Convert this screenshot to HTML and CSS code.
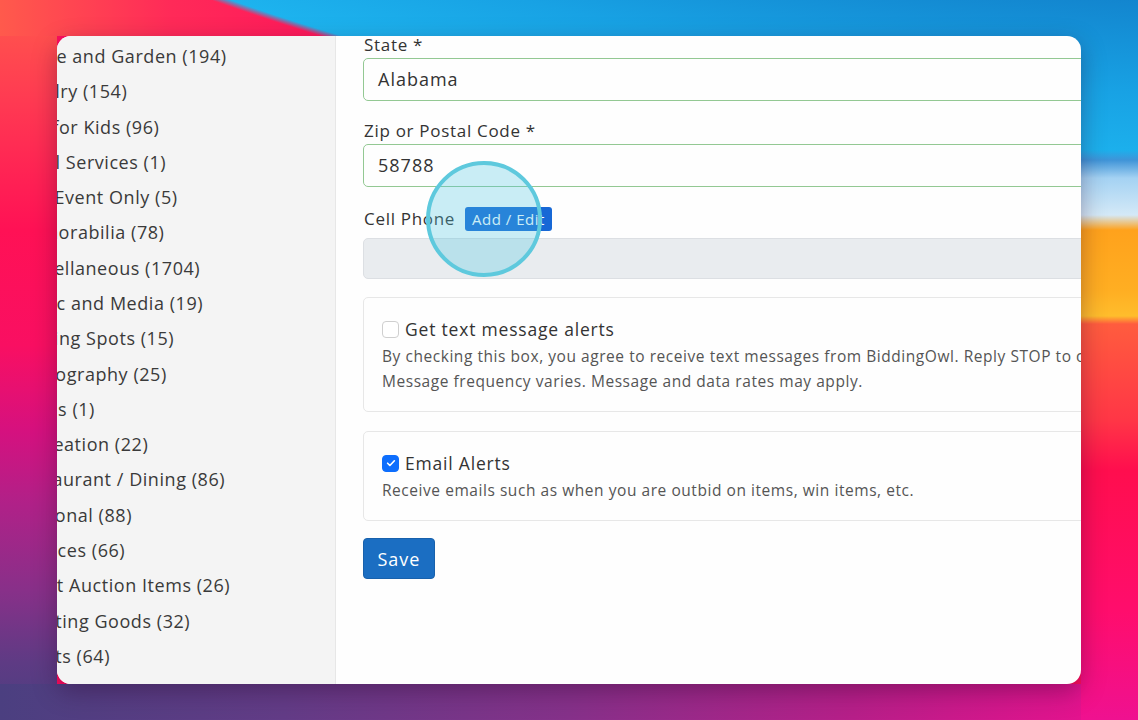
FILE: index.html
```html
<!DOCTYPE html>
<html lang="en">
<head>
<meta charset="utf-8">
<title>Profile</title>
<link rel="stylesheet" href="styles.css">
</head>
<body>
<div class="window">
  <aside class="sidebar">
    <ul class="cats">
      <li>Home and Garden (194)</li>
      <li>Jewelry (154)</li>
      <li>Just for Kids (96)</li>
      <li>Legal Services (1)</li>
      <li>Live Event Only (5)</li>
      <li>Memorabilia (78)</li>
      <li>Miscellaneous (1704)</li>
      <li>Music and Media (19)</li>
      <li>Parking Spots (15)</li>
      <li>Photography (25)</li>
      <li>Prizes (1)</li>
      <li>Recreation (22)</li>
      <li>Restaurant / Dining (86)</li>
      <li>Seasonal (88)</li>
      <li>Services (66)</li>
      <li>Silent Auction Items (26)</li>
      <li>Sporting Goods (32)</li>
      <li>Sports (64)</li>
      <li>Travel and Getaways (37)</li>
    </ul>
  </aside>
  <main class="main">
    <form class="form">
      <div class="group">
        <label class="label">State *</label>
        <div class="input valid">Alabama</div>
      </div>
      <div class="group">
        <label class="label">Zip or Postal Code *</label>
        <div class="input valid">58788</div>
      </div>
      <div class="group">
        <div class="label label-row">Cell Phone <span class="badge">Add / Edit</span></div>
        <div class="input disabled"></div>
      </div>
      <div class="card">
        <div class="check-row"><span class="checkbox"></span><span class="check-title">Get text message alerts</span></div>
        <p class="desc">By checking this box, you agree to receive text messages from BiddingOwl. Reply STOP to opt out.<br>Message frequency varies. Message and data rates may apply.</p>
      </div>
      <div class="card">
        <div class="check-row"><span class="checkbox checked"><svg viewBox="0 0 16 16" width="12" height="12"><path d="M3.5 8.3l3 3 6-6.3" fill="none" stroke="#fff" stroke-width="2.2" stroke-linecap="round" stroke-linejoin="round"/></svg></span><span class="check-title">Email Alerts</span></div>
        <p class="desc">Receive emails such as when you are outbid on items, win items, etc.</p>
      </div>
      <button type="button" class="btn-save">Save</button>
    </form>
  </main>
  <div class="cursor-ring"></div>
</div>
</body>
</html>
```

FILE: styles.css
```css
* { box-sizing: border-box; }
html, body { margin: 0; height: 720px; overflow: hidden; }
body {
  padding: 36px 57px;
  font-family: "Open Sans", "Liberation Sans", sans-serif;
  color: #333;
  background:
    linear-gradient(to bottom, rgba(0,0,0,0) 0, rgba(0,0,0,0) 150px, #3f94d8 160px, #a4d2f3 178px, #d4e9f7 215px, #ffa21c 230px, #ffae22 290px, #ffbd2c 316px, #ff5c3e 324px, #ff3646 420px, #ff0e4e 470px, #ff0d6c 610px, #ef1190 720px) right top / 57px 720px no-repeat,
    radial-gradient(ellipse 1805px 778px at 1360px -600px, #0a5aa6 0%, #0f72c0 70%, #18a2e4 90%, #1db3ee 99.3%, rgba(29,179,238,0) 100%) 0 0 / 1138px 720px no-repeat,
    linear-gradient(to right, #4b3f80 0%, #633c87 25%, #86318a 50%, #b71f89 75%, #ee108f 100%) left bottom / 1138px 36px no-repeat,
    linear-gradient(to right, #ff5a4c 0%, #ff2a58 15%, #ff0f5c 35%, #ff0c5e 100%) left top / 1138px 36px no-repeat,
    linear-gradient(to bottom, #ff5a4c 0%, #ff3a52 14%, #ff1155 32%, #f90f62 48%, #d5117f 60%, #b02188 70%, #883089 82%, #5e3b84 92%, #4b3f80 100%) left top / 57px 720px no-repeat,
    #ff0d5e;
}

.window {
  position: relative;
  width: 1024px;
  height: 648px;
  display: flex;
  border-radius: 14px;
  overflow: hidden;
  background: #fefefe;
  box-shadow: 0 8px 24px rgba(40, 0, 40, 0.35);
}

.sidebar {
  width: 279px;
  flex: none;
  background: #f4f4f4;
  border-right: 1px solid #e7e7e7;
  overflow: hidden;
}
.cats {
  list-style: none;
  margin: 0 0 0 -43px;
  padding: 3px 0 0 0;
  white-space: nowrap;
}
.cats li {
  font-size: 18px;
  line-height: 35.28px;
  letter-spacing: 0.55px;
  color: #3a3a3a;
}

.main {
  flex: 1;
  min-width: 0;
  overflow: hidden;
  padding-left: 27px;
}
.form {
  width: 1000px;
  margin-top: -3px;
}
.group { margin-bottom: 18px; }
.label {
  display: block;
  font-size: 17px;
  line-height: 24px;
  letter-spacing: 0.7px;
  margin-bottom: 1px;
  padding-left: 1px;
  color: #333;
}
.label-row {
  display: flex;
  align-items: center;
  gap: 10px;
  height: 28px;
  line-height: 28px;
  margin-bottom: 5px;
}
.badge {
  display: inline-block;
  height: 24px;
  line-height: 24px;
  padding: 0 7px;
  background: #1768d6;
  color: #fff;
  border-radius: 3px;
  font-size: 15px;
  letter-spacing: 0.5px;
}
.input {
  height: 43px;
  border: 1px solid #ced4da;
  border-radius: 5px;
  padding: 0 14px;
  font-size: 18px;
  letter-spacing: 1px;
  line-height: 41px;
  color: #333;
}
.input.valid { border-color: #93c893; }
.input.disabled {
  height: 41px;
  background: #e9ecef;
  border-color: #dcdfe3;
}

.card {
  border: 1px solid #e7e7e7;
  border-radius: 5px;
  padding: 18px 18px 17px;
  margin-bottom: 19px;
  background: #fefefe;
}
.check-row {
  display: flex;
  align-items: center;
  gap: 6px;
  height: 26px;
}
.checkbox {
  width: 17px;
  height: 17px;
  border: 1px solid #cfcfcf;
  border-radius: 4px;
  background: #fff;
  display: flex;
  align-items: center;
  justify-content: center;
  flex: none;
}
.checkbox.checked {
  background: #0d6efd;
  border-color: #0d6efd;
}
.check-title {
  font-size: 17.5px;
  letter-spacing: 0.8px;
  line-height: 26px;
  color: #333;
}
.desc {
  margin: 2px 0 0 0;
  font-size: 15.5px;
  letter-spacing: 0.55px;
  line-height: 25px;
  color: #555;
}

.btn-save {
  display: block;
  margin-top: -2px;
  width: 72px;
  height: 41px;
  background: #1b6ec2;
  border: 1px solid #1861ac;
  border-radius: 4px;
  color: #fff;
  font-family: inherit;
  font-size: 18px;
  letter-spacing: 1px;
  padding: 0;
}

.cursor-ring {
  position: absolute;
  left: 369px;
  top: 125px;
  width: 116px;
  height: 116px;
  border-radius: 50%;
  border: 4px solid #5ec9dd;
  background: rgba(80, 200, 225, 0.3);
}
```
